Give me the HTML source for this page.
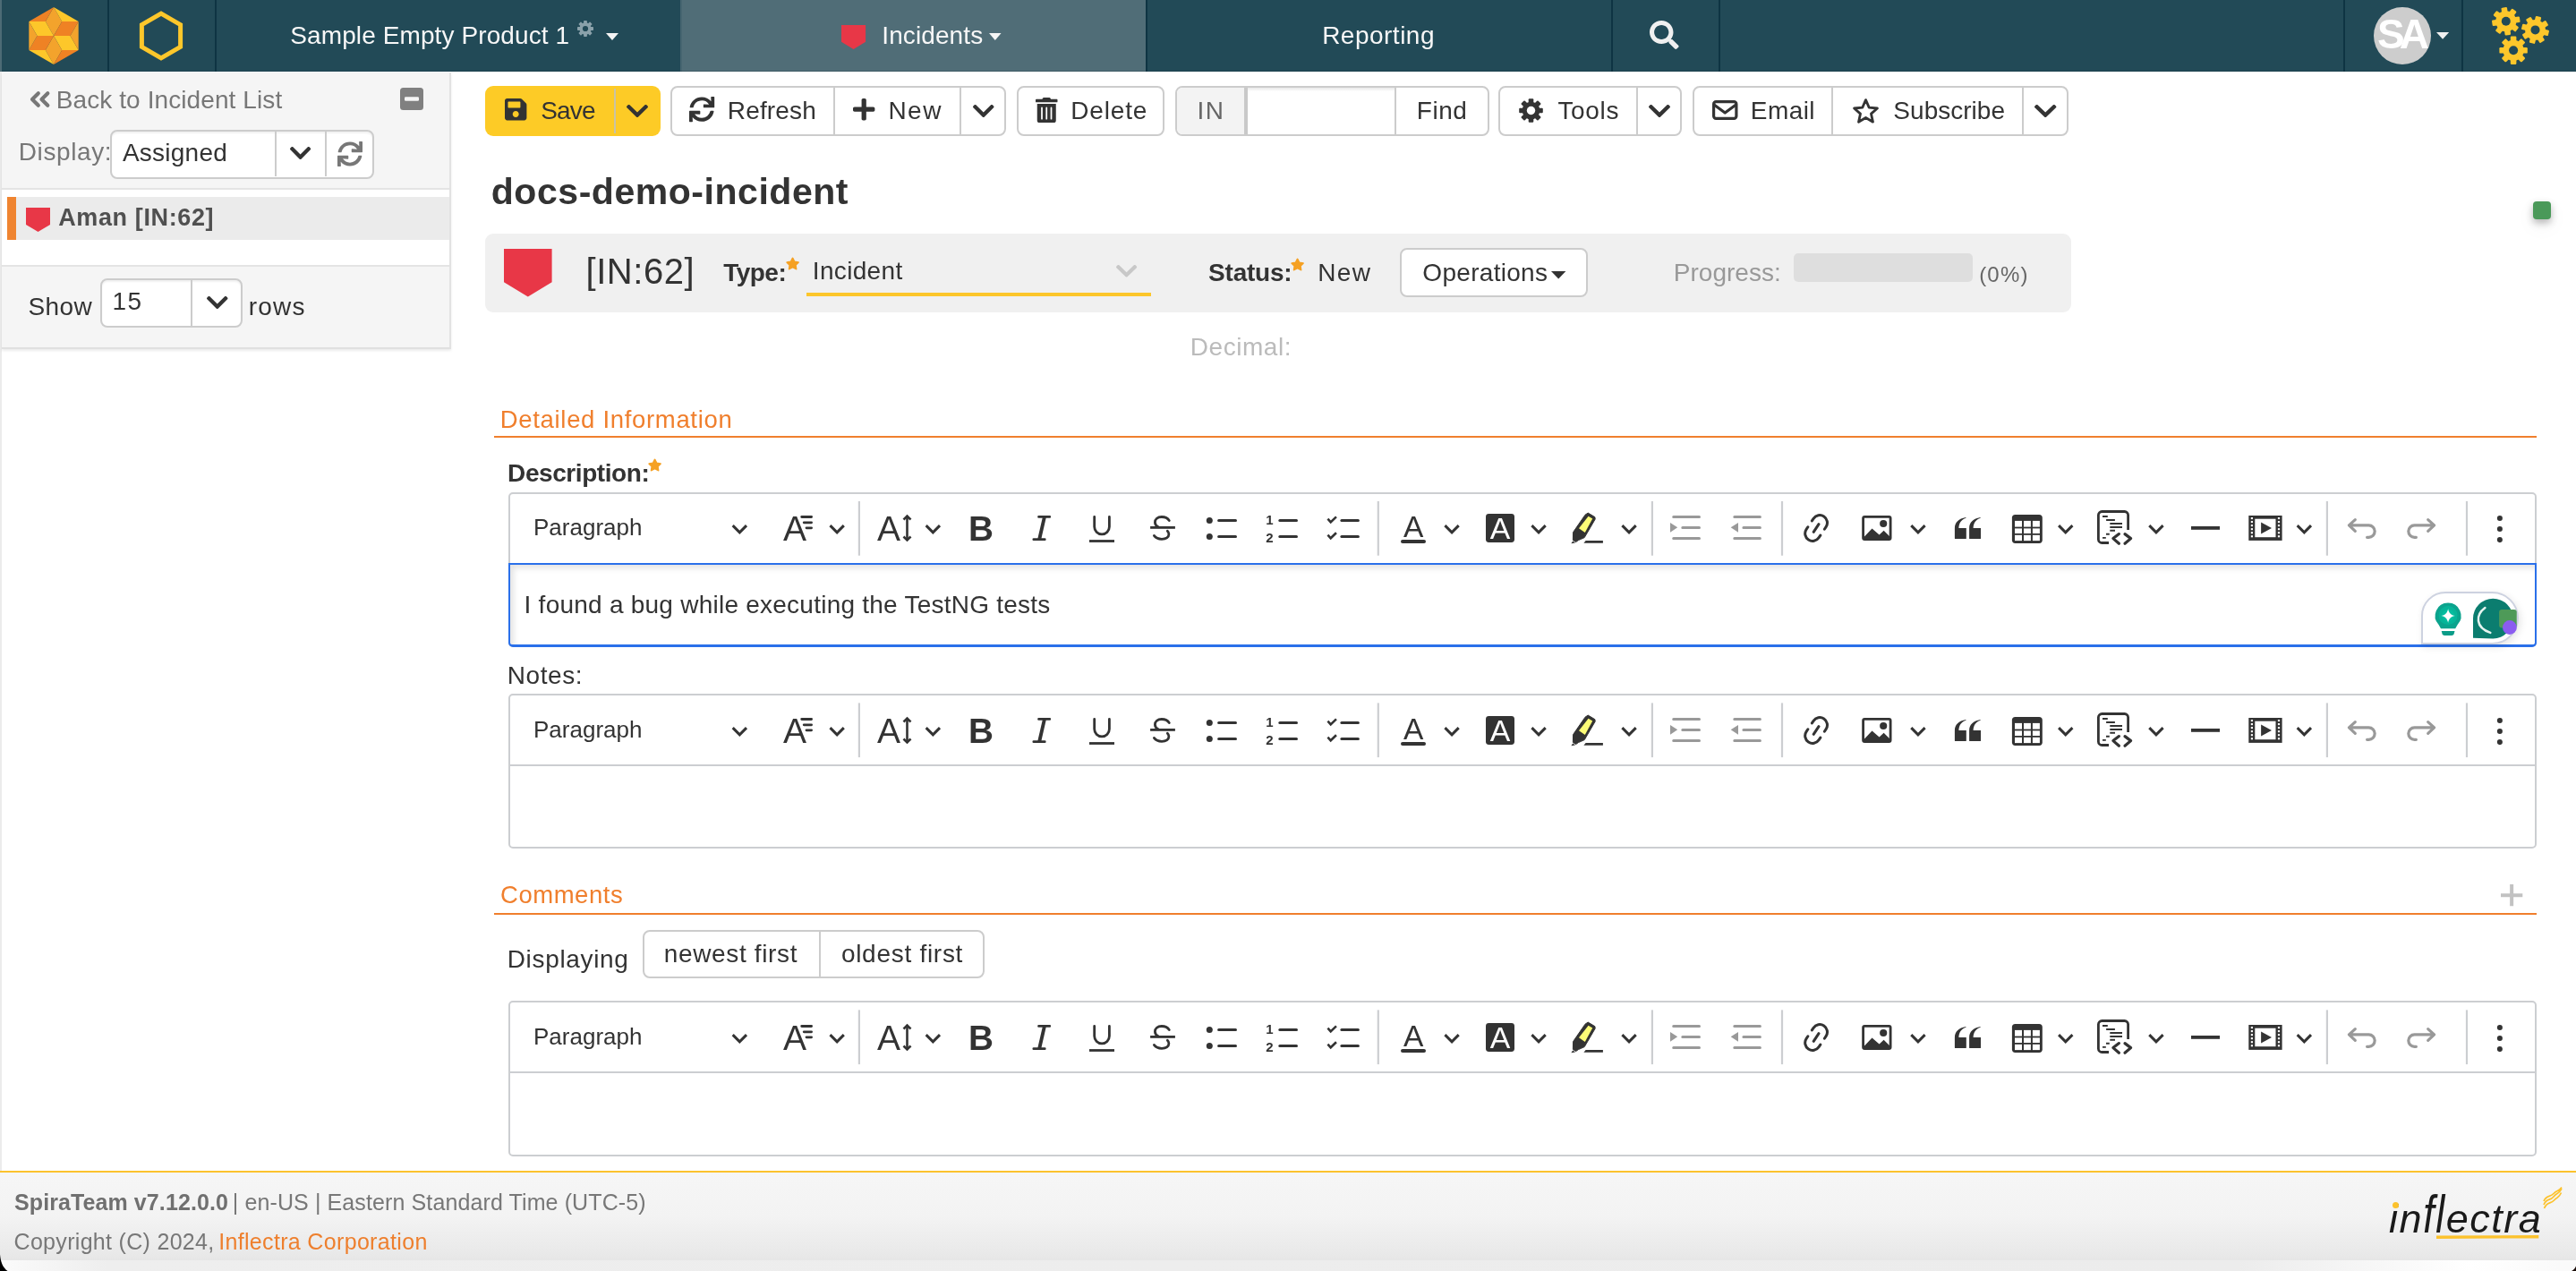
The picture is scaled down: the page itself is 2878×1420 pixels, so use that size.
<!DOCTYPE html>
<html lang="en"><head><meta charset="utf-8"><title>docs-demo-incident | SpiraTeam</title>
<style>
*{box-sizing:border-box;margin:0;padding:0}
html,body{width:2878px;height:1420px;overflow:hidden;background:#fff}
body{position:relative;will-change:transform;font-family:"Liberation Sans",sans-serif;color:#333}
div,span.t,svg{position:absolute}
span.t{white-space:nowrap;display:block}
svg{overflow:visible}
@media (max-width:2000px){html{zoom:.5}}
</style></head>
<body>
<div style="left:0px;top:0px;width:2878px;height:80px;background:#224a57"></div><div style="left:760px;top:0px;width:520px;height:80px;background:#506d77"></div><div style="left:760px;top:0px;width:2px;height:80px;background:#466570"></div><div style="left:120px;top:0px;width:2px;height:80px;background:#0e3443"></div><div style="left:240px;top:0px;width:2px;height:80px;background:#0e3443"></div><div style="left:1280px;top:0px;width:2px;height:80px;background:#0e3443"></div><div style="left:1800.2px;top:0px;width:2px;height:80px;background:#0e3443"></div><div style="left:1920.1px;top:0px;width:2px;height:80px;background:#0e3443"></div><div style="left:2618px;top:0px;width:2px;height:80px;background:#0e3443"></div><div style="left:2749.8px;top:0px;width:2px;height:80px;background:#0e3443"></div><div style="left:0px;top:79px;width:2878px;height:1px;background:rgba(10,40,52,.25)"></div><div style="left:0px;top:0px;width:2px;height:80px;background:#4d6b75"></div><svg style="left:0px;top:0px;" width="120" height="80" viewBox="0 0 120 80" ><polygon points="60.0,39.9 50.8,23.9 60.0,7.9 69.2,23.9" fill="#f3a32c"/><polygon points="60.0,39.9 69.2,23.9 87.7,23.9 78.5,39.9" fill="#ef8224"/><polygon points="60.0,39.9 78.5,39.9 87.7,55.9 69.2,55.9" fill="#fdc72a"/><polygon points="60.0,39.9 69.2,55.9 60.0,71.9 50.8,55.9" fill="#f3a32c"/><polygon points="60.0,39.9 50.8,55.9 32.3,55.9 41.5,39.9" fill="#ef8224"/><polygon points="60.0,39.9 41.5,39.9 32.3,23.9 50.8,23.9" fill="#fdc72a"/><polygon points="60.0,7.9 87.7,23.9 69.2,23.9" fill="#fdc72a"/><polygon points="87.7,23.9 87.7,55.9 78.5,39.9" fill="#f3a32c"/><polygon points="87.7,55.9 60.0,71.9 69.2,55.9" fill="#ef8224"/><polygon points="60.0,71.9 32.3,55.9 50.8,55.9" fill="#fdc72a"/><polygon points="32.3,55.9 32.3,23.9 41.5,39.9" fill="#f3a32c"/><polygon points="32.3,23.9 60.0,7.9 50.8,23.9" fill="#ef8224"/></svg><svg style="left:120px;top:0px;" width="120" height="80" viewBox="120 0 120 80" ><polygon points="180.0,15.1 201.6,27.6 201.6,52.4 180.0,64.9 158.4,52.4 158.4,27.6" fill="none" stroke="#fdc72b" stroke-width="5"/></svg><span id="t0" class="t" style='left:324.25px;top:25.80px;font-size:28px;line-height:28px;color:#f7f7f7;letter-spacing:0.104px;'>Sample Empty Product 1</span><svg style="left:644.3px;top:22.1px;" width="20" height="20" viewBox="0 0 20 20" ><g transform="translate(10,10)" fill="#8aa1aa"><circle r="6.66"/><rect x="-1.89" y="-9.00" width="3.78" height="9.00" rx="0.68" transform="rotate(0.0)"/><rect x="-1.89" y="-9.00" width="3.78" height="9.00" rx="0.68" transform="rotate(45.0)"/><rect x="-1.89" y="-9.00" width="3.78" height="9.00" rx="0.68" transform="rotate(90.0)"/><rect x="-1.89" y="-9.00" width="3.78" height="9.00" rx="0.68" transform="rotate(135.0)"/><rect x="-1.89" y="-9.00" width="3.78" height="9.00" rx="0.68" transform="rotate(180.0)"/><rect x="-1.89" y="-9.00" width="3.78" height="9.00" rx="0.68" transform="rotate(225.0)"/><rect x="-1.89" y="-9.00" width="3.78" height="9.00" rx="0.68" transform="rotate(270.0)"/><rect x="-1.89" y="-9.00" width="3.78" height="9.00" rx="0.68" transform="rotate(315.0)"/></g><circle cx="10" cy="10" r="3.1" fill="#224a57"/></svg><svg style="left:677.2px;top:36.6px;" width="14" height="7.9" viewBox="0 0 14 7.9" ><path d="M0 0H14L7.0 7.9z" fill="#f5f5f5"/></svg><svg style="left:940.3px;top:28.2px;" width="27.1" height="26.9" viewBox="0 0 27.1 26.9" ><path d="M0 0H27.1V18.83L13.55 26.9L0 18.83z" fill="#e83747"/></svg><span id="t1" class="t" style='left:985.27px;top:25.80px;font-size:28px;line-height:28px;color:#f7f7f7;letter-spacing:0.100px;'>Incidents</span><svg style="left:1104.5px;top:36.5px;" width="13.6" height="8.1" viewBox="0 0 13.6 8.1" ><path d="M0 0H13.6L6.8 8.1z" fill="#f5f5f5"/></svg><span id="t2" class="t" style='left:1477.15px;top:25.80px;font-size:28px;line-height:28px;color:#f7f7f7;letter-spacing:0.491px;'>Reporting</span><svg style="left:1843px;top:23px;" width="32.6" height="32" viewBox="0 0 512 512" preserveAspectRatio="none"><path d="M505 442.7L405.300 343c-4.500-4.500-10.600-7-17-7H372c27.600-35.300 44-79.700 44-128C416 93.100 322.900 0 208 0S0 93.100 0 208s93.100 208 208 208c48.300 0 92.700-16.400 128-44v16.300c0 6.400 2.500 12.500 7 17l99.700 99.700c9.400 9.400 24.600 9.400 33.900 0l28.300-28.300c9.400-9.400 9.400-24.600.100-34zM208 336c-70.700 0-128-57.200-128-128 0-70.700 57.200-128 128-128 70.700 0 128 57.200 128 128 0 70.700-57.200 128-128 128z" fill="#f0f0f0"/></svg><div style="left:2652px;top:8px;width:63.8px;height:64px;background:#cdcdcd;border-radius:50%"></div><span id="t3" class="t" style='left:2655.93px;top:14.76px;font-size:46px;line-height:46px;color:#fff;font-weight:700;letter-spacing:-5.850px;'>SA</span><svg style="left:2722px;top:36.4px;" width="14.2" height="7.7" viewBox="0 0 14.2 7.7" ><path d="M0 0H14.2L7.1 7.7z" fill="#f0f0f0"/></svg><svg style="left:2780px;top:4px;" width="76" height="72" viewBox="0 0 76 72" ><g transform="translate(19.8,19.8)" fill="#fdc72b"><circle r="11.54"/><rect x="-3.28" y="-15.60" width="6.55" height="15.60" rx="1.18" transform="rotate(-8.0)"/><rect x="-3.28" y="-15.60" width="6.55" height="15.60" rx="1.18" transform="rotate(37.0)"/><rect x="-3.28" y="-15.60" width="6.55" height="15.60" rx="1.18" transform="rotate(82.0)"/><rect x="-3.28" y="-15.60" width="6.55" height="15.60" rx="1.18" transform="rotate(127.0)"/><rect x="-3.28" y="-15.60" width="6.55" height="15.60" rx="1.18" transform="rotate(172.0)"/><rect x="-3.28" y="-15.60" width="6.55" height="15.60" rx="1.18" transform="rotate(217.0)"/><rect x="-3.28" y="-15.60" width="6.55" height="15.60" rx="1.18" transform="rotate(262.0)"/><rect x="-3.28" y="-15.60" width="6.55" height="15.60" rx="1.18" transform="rotate(307.0)"/></g><circle cx="19.8" cy="19.8" r="5" fill="#224a57"/><g transform="translate(52.5,29.4)" fill="#fdc72b"><circle r="11.40"/><rect x="-3.23" y="-15.40" width="6.47" height="15.40" rx="1.16" transform="rotate(14.0)"/><rect x="-3.23" y="-15.40" width="6.47" height="15.40" rx="1.16" transform="rotate(59.0)"/><rect x="-3.23" y="-15.40" width="6.47" height="15.40" rx="1.16" transform="rotate(104.0)"/><rect x="-3.23" y="-15.40" width="6.47" height="15.40" rx="1.16" transform="rotate(149.0)"/><rect x="-3.23" y="-15.40" width="6.47" height="15.40" rx="1.16" transform="rotate(194.0)"/><rect x="-3.23" y="-15.40" width="6.47" height="15.40" rx="1.16" transform="rotate(239.0)"/><rect x="-3.23" y="-15.40" width="6.47" height="15.40" rx="1.16" transform="rotate(284.0)"/><rect x="-3.23" y="-15.40" width="6.47" height="15.40" rx="1.16" transform="rotate(329.0)"/></g><circle cx="52.5" cy="29.4" r="5" fill="#224a57"/><g transform="translate(28.1,52.3)" fill="#fdc72b"><circle r="11.62"/><rect x="-3.30" y="-15.70" width="6.59" height="15.70" rx="1.19" transform="rotate(0.0)"/><rect x="-3.30" y="-15.70" width="6.59" height="15.70" rx="1.19" transform="rotate(45.0)"/><rect x="-3.30" y="-15.70" width="6.59" height="15.70" rx="1.19" transform="rotate(90.0)"/><rect x="-3.30" y="-15.70" width="6.59" height="15.70" rx="1.19" transform="rotate(135.0)"/><rect x="-3.30" y="-15.70" width="6.59" height="15.70" rx="1.19" transform="rotate(180.0)"/><rect x="-3.30" y="-15.70" width="6.59" height="15.70" rx="1.19" transform="rotate(225.0)"/><rect x="-3.30" y="-15.70" width="6.59" height="15.70" rx="1.19" transform="rotate(270.0)"/><rect x="-3.30" y="-15.70" width="6.59" height="15.70" rx="1.19" transform="rotate(315.0)"/></g><circle cx="28.1" cy="52.3" r="5" fill="#224a57"/></svg><div style="left:0px;top:80px;width:2px;height:1340px;background:#ebebeb"></div><div style="left:2px;top:81px;width:502px;height:309px;background:#f5f5f5;border-radius:3px 0 0 0;border-right:2px solid #e2e2e2;border-bottom:2px solid #e0e0e0;box-shadow:0 2px 3px rgba(0,0,0,.08)"></div><div style="left:2px;top:210px;width:500px;height:88px;background:#fff;border-top:2px solid #e4e4e4;border-bottom:2px solid #e4e4e4"></div><div style="left:8px;top:220px;width:494px;height:48px;background:#ebebeb"></div><div style="left:8px;top:220px;width:10px;height:48px;background:#ef8430"></div><svg style="left:28.5px;top:232.4px;" width="27" height="27" viewBox="0 0 27 27" ><path d="M0 0H27V18.90L13.5 27L0 18.90z" fill="#e83747"/></svg><span id="t4" class="t" style='left:65.25px;top:230.24px;font-size:27px;line-height:27px;color:#505050;font-weight:700;letter-spacing:0.614px;'>Aman [IN:62]</span><svg style="left:33px;top:102px;" width="23" height="18" viewBox="0 0 23 18" ><path d="M9.800 2.300L3 9L9.800 15.700M20.300 2.300L13.500 9L20.300 15.700" fill="none" stroke="#777" stroke-width="4.200" stroke-linejoin="round" stroke-linecap="round"/></svg><span id="t5" class="t" style='left:62.75px;top:97.90px;font-size:28px;line-height:28px;color:#777;letter-spacing:0.094px;'>Back to Incident List</span><svg style="left:447px;top:98px;" width="26" height="25" viewBox="0 0 26 25" ><rect width="26" height="25" rx="3.5" fill="#808080"/><rect x="5" y="10.3" width="16" height="4.4" rx="1.2" fill="#f5f5f5"/></svg><span id="t6" class="t" style='left:20.75px;top:156.40px;font-size:28px;line-height:28px;color:#777;letter-spacing:0.607px;'>Display:</span><div style="left:123.3px;top:144.6px;width:295.2px;height:55px;background:#fff;border:2px solid #ccc;border-radius:8px;box-shadow:inset 0 2px 2px rgba(0,0,0,.06)"></div><div style="left:307px;top:147px;width:2px;height:50px;background:#ccc"></div><div style="left:363px;top:147px;width:2px;height:50px;background:#ccc"></div><span id="t7" class="t" style='left:136.88px;top:157.40px;font-size:28px;line-height:28px;color:#333;letter-spacing:0.250px;'>Assigned</span><svg style="left:324.4px;top:164.4px;" width="23.2" height="14" viewBox="5.66 123.5 436.7 265" preserveAspectRatio="none"><path d="M207.029 381.476L12.686 187.132c-9.373-9.373-9.373-24.569 0-33.941l22.667-22.667c9.357-9.357 24.522-9.375 33.901-.04L224 284.505l154.745-154.021c9.379-9.335 24.544-9.317 33.901.04l22.667 22.667c9.373 9.373 9.373 24.569 0 33.941L240.971 381.476c-9.373 9.372-24.569 9.372-33.942 0z" fill="#333"/></svg><svg style="left:376.6px;top:158px;" width="28" height="28" viewBox="0 0 512 512" ><path d="M440.65 12.57l4 82.77A247.16 247.16 0 0 0 255.83 8C134.73 8 33.91 94.92 12.29 209.82A12 12 0 0 0 24.09 224h49.05a12 12 0 0 0 11.67-9.26 175.91 175.91 0 0 1 317-56.94l-101.46-4.86a12 12 0 0 0-12.57 12v47.41a12 12 0 0 0 12 12H500a12 12 0 0 0 12-12V12a12 12 0 0 0-12-12h-47.37a12 12 0 0 0-11.98 12.57zM255.83 432a175.61 175.61 0 0 1-146-77.8l101.8 4.87a12 12 0 0 0 12.57-12v-47.4a12 12 0 0 0-12-12H12a12 12 0 0 0-12 12V500a12 12 0 0 0 12 12h47.35a12 12 0 0 0 12-12.6l-4.15-82.57A247.17 247.17 0 0 0 255.83 504c121.11 0 221.93-86.92 243.55-201.82a12 12 0 0 0-11.8-14.18h-49.05a12 12 0 0 0-11.67 9.26A175.86 175.86 0 0 1 255.83 432z" fill="#777"/></svg><span id="t8" class="t" style='left:31.45px;top:328.90px;font-size:28px;line-height:28px;color:#333;letter-spacing:0.375px;'>Show</span><div style="left:111.5px;top:310.7px;width:159px;height:55px;background:#fff;border:2px solid #ccc;border-radius:8px;box-shadow:inset 0 2px 2px rgba(0,0,0,.06)"></div><div style="left:213px;top:312.7px;width:2px;height:51px;background:#ccc"></div><span id="t9" class="t" style='left:125.39px;top:322.60px;font-size:28px;line-height:28px;color:#333;letter-spacing:1.500px;'>15</span><svg style="left:230.5px;top:331px;" width="23.5" height="14" viewBox="5.66 123.5 436.7 265" preserveAspectRatio="none"><path d="M207.029 381.476L12.686 187.132c-9.373-9.373-9.373-24.569 0-33.941l22.667-22.667c9.357-9.357 24.522-9.375 33.901-.04L224 284.505l154.745-154.021c9.379-9.335 24.544-9.317 33.901.04l22.667 22.667c9.373 9.373 9.373 24.569 0 33.941L240.971 381.476c-9.373 9.372-24.569 9.372-33.942 0z" fill="#333"/></svg><span id="t10" class="t" style='left:277.73px;top:328.90px;font-size:28px;line-height:28px;color:#333;letter-spacing:1.250px;'>rows</span><div style="left:542px;top:96px;width:196px;height:56px;background:#fdcb26;border-radius:9px"></div><div style="left:686px;top:99px;width:2px;height:50px;background:#c9c3a6"></div><svg style="left:564px;top:110.4px;" width="24.4" height="24.4" viewBox="0 32 448 448" preserveAspectRatio="none"><path d="M433.941 129.941l-83.882-83.882A48 48 0 0 0 316.118 32H48C21.49 32 0 53.49 0 80v352c0 26.51 21.49 48 48 48h352c26.51 0 48-21.49 48-48V163.882a48 48 0 0 0-14.059-33.941zM224 416c-35.346 0-64-28.654-64-64 0-35.346 28.654-64 64-64s64 28.654 64 64c0 35.346-28.654 64-64 64zm96-304.52V212c0 6.627-5.373 12-12 12H76c-6.627 0-12-5.373-12-12V108c0-6.627 5.373-12 12-12h228.52c3.183 0 6.235 1.264 8.485 3.515l3.48 3.48A11.996 11.996 0 0 1 320 111.48z" fill="#333"/></svg><span id="t11" class="t" style='left:604.15px;top:109.70px;font-size:28px;line-height:28px;color:#333;letter-spacing:-0.792px;'>Save</span><svg style="left:700px;top:116.6px;" width="24" height="14" viewBox="5.66 123.5 436.7 265" preserveAspectRatio="none"><path d="M207.029 381.476L12.686 187.132c-9.373-9.373-9.373-24.569 0-33.941l22.667-22.667c9.357-9.357 24.522-9.375 33.901-.04L224 284.505l154.745-154.021c9.379-9.335 24.544-9.317 33.901.04l22.667 22.667c9.373 9.373 9.373 24.569 0 33.941L240.971 381.476c-9.373 9.372-24.569 9.372-33.942 0z" fill="#333"/></svg><div style="left:749px;top:96px;width:375px;height:56px;background:#fff;border:2px solid #ccc;border-radius:8px"></div><div style="left:931px;top:98px;width:2px;height:52px;background:#ccc"></div><div style="left:1072px;top:98px;width:2px;height:52px;background:#ccc"></div><svg style="left:769.9px;top:108.1px;" width="28.2" height="28.2" viewBox="0 0 512 512" ><path d="M440.65 12.57l4 82.77A247.16 247.16 0 0 0 255.83 8C134.73 8 33.91 94.92 12.29 209.82A12 12 0 0 0 24.09 224h49.05a12 12 0 0 0 11.67-9.26 175.91 175.91 0 0 1 317-56.94l-101.46-4.86a12 12 0 0 0-12.57 12v47.41a12 12 0 0 0 12 12H500a12 12 0 0 0 12-12V12a12 12 0 0 0-12-12h-47.37a12 12 0 0 0-11.98 12.57zM255.83 432a175.61 175.61 0 0 1-146-77.8l101.8 4.87a12 12 0 0 0 12.57-12v-47.4a12 12 0 0 0-12-12H12a12 12 0 0 0-12 12V500a12 12 0 0 0 12 12h47.35a12 12 0 0 0 12-12.6l-4.15-82.57A247.17 247.17 0 0 0 255.83 504c121.11 0 221.93-86.92 243.55-201.82a12 12 0 0 0-11.8-14.18h-49.05a12 12 0 0 0-11.67 9.26A175.86 175.86 0 0 1 255.83 432z" fill="#333"/></svg><span id="t12" class="t" style='left:812.75px;top:109.70px;font-size:28px;line-height:28px;color:#333;letter-spacing:0.167px;'>Refresh</span><svg style="left:952.8px;top:110.3px;" width="24.4" height="24.4" viewBox="0 32 448 448" preserveAspectRatio="none"><path d="M416 208H272V64c0-17.67-14.33-32-32-32h-32c-17.67 0-32 14.33-32 32v144H32c-17.67 0-32 14.33-32 32v32c0 17.67 14.33 32 32 32h144v144c0 17.67 14.33 32 32 32h32c17.67 0 32-14.33 32-32V304h144c17.67 0 32-14.33 32-32v-32c0-17.67-14.33-32-32-32z" fill="#333"/></svg><span id="t13" class="t" style='left:992.38px;top:109.70px;font-size:28px;line-height:28px;color:#333;letter-spacing:1.500px;'>New</span><svg style="left:1086.8px;top:116.6px;" width="23.5" height="14" viewBox="5.66 123.5 436.7 265" preserveAspectRatio="none"><path d="M207.029 381.476L12.686 187.132c-9.373-9.373-9.373-24.569 0-33.941l22.667-22.667c9.357-9.357 24.522-9.375 33.901-.04L224 284.505l154.745-154.021c9.379-9.335 24.544-9.317 33.901.04l22.667 22.667c9.373 9.373 9.373 24.569 0 33.941L240.971 381.476c-9.373 9.372-24.569 9.372-33.942 0z" fill="#333"/></svg><div style="left:1135.5px;top:96px;width:165.5px;height:56px;background:#fff;border:2px solid #ccc;border-radius:8px"></div><svg style="left:1156.6px;top:108.8px;" width="24.5" height="28" viewBox="0 0 448 512" preserveAspectRatio="none"><path d="M32 464a48 48 0 0 0 48 48h288a48 48 0 0 0 48-48V128H32zm272-256a16 16 0 0 1 32 0v224a16 16 0 0 1-32 0zm-96 0a16 16 0 0 1 32 0v224a16 16 0 0 1-32 0zm-96 0a16 16 0 0 1 32 0v224a16 16 0 0 1-32 0zM432 32H312l-9.4-18.7A24 24 0 0 0 281.1 0H166.800a23.720 23.720 0 0 0-21.400 13.300L136 32H16A16 16 0 0 0 0 48v32a16 16 0 0 0 16 16h416a16 16 0 0 0 16-16V48a16 16 0 0 0-16-16z" fill="#333"/></svg><span id="t14" class="t" style='left:1196.35px;top:109.70px;font-size:28px;line-height:28px;color:#333;letter-spacing:0.800px;'>Delete</span><div style="left:1312.5px;top:96px;width:351px;height:56px;background:#fff;border:2px solid #ccc;border-radius:8px"></div><div style="left:1558px;top:98px;width:2px;height:52px;background:#ccc"></div><div style="left:1315px;top:98px;width:75px;height:52px;background:#f3f3f3;border-radius:6px 0 0 6px"></div><div style="left:1390px;top:98px;width:4px;height:52px;background:#c9c9c9"></div><div style="left:1394px;top:98px;width:164px;height:4px;background:linear-gradient(#e9e9e9,#fff)"></div><span id="t15" class="t" style='left:1337.42px;top:109.70px;font-size:28px;line-height:28px;color:#666;letter-spacing:1.500px;'>IN</span><span id="t16" class="t" style='left:1582.75px;top:109.70px;font-size:28px;line-height:28px;color:#333;letter-spacing:0.542px;'>Find</span><div style="left:1674px;top:96px;width:205px;height:56px;background:#fff;border:2px solid #ccc;border-radius:8px"></div><div style="left:1828px;top:98px;width:2px;height:52px;background:#ccc"></div><svg style="left:1697px;top:109.5px;" width="27" height="27" viewBox="0 0 27 27" ><g transform="translate(13.5,13.5)" fill="#333"><circle r="9.84"/><rect x="-2.79" y="-13.30" width="5.59" height="13.30" rx="1.01" transform="rotate(0.0)"/><rect x="-2.79" y="-13.30" width="5.59" height="13.30" rx="1.01" transform="rotate(45.0)"/><rect x="-2.79" y="-13.30" width="5.59" height="13.30" rx="1.01" transform="rotate(90.0)"/><rect x="-2.79" y="-13.30" width="5.59" height="13.30" rx="1.01" transform="rotate(135.0)"/><rect x="-2.79" y="-13.30" width="5.59" height="13.30" rx="1.01" transform="rotate(180.0)"/><rect x="-2.79" y="-13.30" width="5.59" height="13.30" rx="1.01" transform="rotate(225.0)"/><rect x="-2.79" y="-13.30" width="5.59" height="13.30" rx="1.01" transform="rotate(270.0)"/><rect x="-2.79" y="-13.30" width="5.59" height="13.30" rx="1.01" transform="rotate(315.0)"/></g><circle cx="13.5" cy="13.5" r="4.7" fill="#fff"/></svg><span id="t17" class="t" style='left:1740.38px;top:109.70px;font-size:28px;line-height:28px;color:#333;letter-spacing:0.688px;'>Tools</span><svg style="left:1842px;top:116.6px;" width="24" height="14" viewBox="5.66 123.5 436.7 265" preserveAspectRatio="none"><path d="M207.029 381.476L12.686 187.132c-9.373-9.373-9.373-24.569 0-33.941l22.667-22.667c9.357-9.357 24.522-9.375 33.901-.04L224 284.505l154.745-154.021c9.379-9.335 24.544-9.317 33.901.04l22.667 22.667c9.373 9.373 9.373 24.569 0 33.941L240.971 381.476c-9.373 9.372-24.569 9.372-33.942 0z" fill="#333"/></svg><div style="left:1890.7px;top:96px;width:420.3px;height:56px;background:#fff;border:2px solid #ccc;border-radius:8px"></div><div style="left:2046px;top:98px;width:2px;height:52px;background:#ccc"></div><div style="left:2259px;top:98px;width:2px;height:52px;background:#ccc"></div><svg style="left:1912.5px;top:111.5px;" width="28.5" height="22" viewBox="0 0 28.5 22" ><rect x="1.6" y="1.6" width="25.3" height="18.8" rx="2.6" fill="none" stroke="#333" stroke-width="3.2"/><path d="M2 5L14.25 14L26.5 5" fill="none" stroke="#333" stroke-width="3.2" stroke-linejoin="round"/></svg><span id="t18" class="t" style='left:1955.75px;top:109.70px;font-size:28px;line-height:28px;color:#333;letter-spacing:0.456px;'>Email</span><svg style="left:2068.5px;top:108.5px;" width="31" height="30" viewBox="0 0 31 30" ><polygon points="15.50,2.60 19.20,11.10 28.43,12.00 21.49,18.15 23.49,27.20 15.50,22.50 7.51,27.20 9.51,18.15 2.57,12.00 11.80,11.10" fill="none" stroke="#333" stroke-width="2.8" stroke-linejoin="round"/></svg><span id="t19" class="t" style='left:2115.35px;top:109.70px;font-size:28px;line-height:28px;color:#333;letter-spacing:0.022px;'>Subscribe</span><svg style="left:2272.6px;top:116.6px;" width="24.4" height="14" viewBox="5.66 123.5 436.7 265" preserveAspectRatio="none"><path d="M207.029 381.476L12.686 187.132c-9.373-9.373-9.373-24.569 0-33.941l22.667-22.667c9.357-9.357 24.522-9.375 33.901-.04L224 284.505l154.745-154.021c9.379-9.335 24.544-9.317 33.901.04l22.667 22.667c9.373 9.373 9.373 24.569 0 33.941L240.971 381.476c-9.373 9.372-24.569 9.372-33.942 0z" fill="#333"/></svg><span id="t20" class="t" style='left:548.77px;top:194.29px;font-size:41px;line-height:41px;color:#333;font-weight:700;letter-spacing:0.543px;'>docs-demo-incident</span><div style="left:2830px;top:225px;width:20px;height:20px;background:#4a9959;border-radius:4px;box-shadow:0 4px 9px rgba(0,0,0,.28), 0 8px 24px rgba(0,0,0,.05)"></div><div style="left:542px;top:261px;width:1772px;height:88px;background:#f0f0f0;border-radius:9px"></div><svg style="left:563px;top:278px;" width="53.6" height="53.4" viewBox="0 0 53.6 53.4" ><path d="M0 0H53.6V37.38L26.8 53.4L0 37.38z" fill="#e83747"/></svg><span id="t21" class="t" style='left:654.52px;top:283.34px;font-size:40px;line-height:40px;color:#333;letter-spacing:0.546px;'>[IN:62]</span><span id="t22" class="t" style='left:808.23px;top:290.60px;font-size:28px;line-height:28px;color:#333;font-weight:700;letter-spacing:-0.525px;'>Type:</span><svg style="left:877.9px;top:287.2px;" width="15.2" height="15.2" viewBox="0 0 20 20" ><polygon points="10.00,1.90 12.65,7.06 18.37,7.98 14.28,12.09 15.17,17.82 10.00,15.20 4.83,17.82 5.72,12.09 1.63,7.98 7.35,7.06" fill="#f5a124" stroke="#f5a124" stroke-width="2.400" stroke-linejoin="round"/></svg><span id="t23" class="t" style='left:907.77px;top:288.90px;font-size:28px;line-height:28px;color:#333;letter-spacing:0.336px;'>Incident</span><div style="left:901px;top:326.7px;width:384.6px;height:4px;background:#fcc62b"></div><svg style="left:1246.8px;top:295.6px;" width="23.2" height="13.6" viewBox="5.66 123.5 436.7 265" preserveAspectRatio="none"><path d="M207.029 381.476L12.686 187.132c-9.373-9.373-9.373-24.569 0-33.941l22.667-22.667c9.357-9.357 24.522-9.375 33.901-.04L224 284.505l154.745-154.021c9.379-9.335 24.544-9.317 33.901.04l22.667 22.667c9.373 9.373 9.373 24.569 0 33.941L240.971 381.476c-9.373 9.372-24.569 9.372-33.942 0z" fill="#c8c8c8"/></svg><span id="t24" class="t" style='left:1350.12px;top:290.70px;font-size:28px;line-height:28px;color:#333;font-weight:700;letter-spacing:-0.229px;'>Status:</span><svg style="left:1441.8px;top:287.6px;" width="15.2" height="15.2" viewBox="0 0 20 20" ><polygon points="10.00,1.90 12.65,7.06 18.37,7.98 14.28,12.09 15.17,17.82 10.00,15.20 4.83,17.82 5.72,12.09 1.63,7.98 7.35,7.06" fill="#f5a124" stroke="#f5a124" stroke-width="2.400" stroke-linejoin="round"/></svg><span id="t25" class="t" style='left:1472.15px;top:290.70px;font-size:28px;line-height:28px;color:#333;letter-spacing:1.425px;'>New</span><div style="left:1564.4px;top:277.2px;width:209.8px;height:55.2px;background:#fff;border:2px solid #ccc;border-radius:8px"></div><span id="t26" class="t" style='left:1589.33px;top:290.70px;font-size:28px;line-height:28px;color:#333;letter-spacing:0.297px;'>Operations</span><svg style="left:1732.8px;top:302.5px;" width="16.4" height="8.6" viewBox="0 0 16.4 8.6" ><path d="M0 0H16.4L8.2 8.6z" fill="#333"/></svg><span id="t27" class="t" style='left:1869.85px;top:290.70px;font-size:28px;line-height:28px;color:#999;'>Progress:</span><div style="left:2004.3px;top:283px;width:199.5px;height:32px;background:#dedede;border-radius:5px"></div><span id="t28" class="t" style='left:2211.20px;top:294.88px;font-size:24px;line-height:24px;color:#666;letter-spacing:1.192px;'>(0%)</span><span id="t29" class="t" style='left:1329.75px;top:374.30px;font-size:28px;line-height:28px;color:#bbb;letter-spacing:0.554px;'>Decimal:</span><span id="t30" class="t" style='left:558.75px;top:454.62px;font-size:27.5px;line-height:27.5px;color:#f07f2d;letter-spacing:0.678px;'>Detailed Information</span><div style="left:552px;top:487.2px;width:2282px;height:2px;background:#f07f2d"></div><span id="t31" class="t" style='left:567.12px;top:515.20px;font-size:28px;line-height:28px;color:#333;font-weight:700;letter-spacing:-0.432px;'>Description:</span><svg style="left:724.3px;top:512.2px;" width="15.2" height="15.2" viewBox="0 0 20 20" ><polygon points="10.00,1.90 12.65,7.06 18.37,7.98 14.28,12.09 15.17,17.82 10.00,15.20 4.83,17.82 5.72,12.09 1.63,7.98 7.35,7.06" fill="#f5a124" stroke="#f5a124" stroke-width="2.400" stroke-linejoin="round"/></svg><div style="left:567.7px;top:549.5px;width:2266.1000000000004px;height:173.20000000000005px;background:#fff;border:2px solid #ccced1;border-radius:5px"></div><div style="left:567.7px;top:628.5px;width:2266.1000000000004px;height:2px;background:#ccced1"></div><div style="left:567.7px;top:628.5px;width:2266.1000000000004px;height:94.20000000000005px;background:#fff;border:2px solid #2a70ea;border-bottom-width:3px;border-radius:0 0 5px 5px;box-shadow:inset 4px 4px 6px rgba(0,0,0,.11)"></div><svg style="left:560px;top:550.0px" width="2300" height="80" viewBox="560 550 2300 80"><rect x="958.8" y="560.0" width="2.2" height="60.7" fill="#ccced1"/><rect x="1538.7" y="560.0" width="2.2" height="60.7" fill="#ccced1"/><rect x="1844.8" y="560.0" width="2.2" height="60.7" fill="#ccced1"/><rect x="1989.9" y="560.0" width="2.2" height="60.7" fill="#ccced1"/><rect x="2598.8" y="560.0" width="2.2" height="60.7" fill="#ccced1"/><rect x="2754.9" y="560.0" width="2.2" height="60.7" fill="#ccced1"/><path d="M818.7 587.1L826.35 594.8L834.0 587.1" fill="none" stroke="#333" stroke-width="3" stroke-linecap="butt" stroke-linejoin="miter"/><path d="M927.5 587.1L935.15 594.8L942.8 587.1" fill="none" stroke="#333" stroke-width="3" stroke-linecap="butt" stroke-linejoin="miter"/><path d="M1034.7 587.1L1042.35 594.8L1050.0 587.1" fill="none" stroke="#333" stroke-width="3" stroke-linecap="butt" stroke-linejoin="miter"/><path d="M1614.4 587.1L1622.05 594.8L1629.7 587.1" fill="none" stroke="#333" stroke-width="3" stroke-linecap="butt" stroke-linejoin="miter"/><path d="M1711.4 587.1L1719.05 594.8L1726.7 587.1" fill="none" stroke="#333" stroke-width="3" stroke-linecap="butt" stroke-linejoin="miter"/><path d="M1812.4 587.1L1820.05 594.8L1827.7 587.1" fill="none" stroke="#333" stroke-width="3" stroke-linecap="butt" stroke-linejoin="miter"/><path d="M2135.3 587.1L2142.95 594.8L2150.6 587.1" fill="none" stroke="#333" stroke-width="3" stroke-linecap="butt" stroke-linejoin="miter"/><path d="M2300.1 587.1L2307.75 594.8L2315.4 587.1" fill="none" stroke="#333" stroke-width="3" stroke-linecap="butt" stroke-linejoin="miter"/><path d="M2401.3 587.1L2408.95 594.8L2416.6 587.1" fill="none" stroke="#333" stroke-width="3" stroke-linecap="butt" stroke-linejoin="miter"/><path d="M2566.7 587.1L2574.35 594.8L2582.0 587.1" fill="none" stroke="#333" stroke-width="3" stroke-linecap="butt" stroke-linejoin="miter"/><text x="596" y="597.6" font-family="Liberation Sans, sans-serif" font-size="26" font-weight="400" fill="#333" text-anchor="start" >Paragraph</text><text x="888.1" y="603.9" font-family="Liberation Sans, sans-serif" font-size="39" font-weight="400" fill="#333" text-anchor="middle" >A</text><path d="M895.7 577.5H906.6M898.2 583.8H906.6M901 589.8H906.6" fill="none" stroke="#333" stroke-width="2.8" stroke-linecap="round" stroke-linejoin="round"/><text x="993" y="603.9" font-family="Liberation Sans, sans-serif" font-size="39" font-weight="400" fill="#333" text-anchor="middle" >A</text><path d="M1013.5 577V603" fill="none" stroke="#333" stroke-width="2.6" stroke-linecap="round" stroke-linejoin="round"/><path d="M1010.4 579.6L1013.5 576.5L1016.6 579.6M1010.4 600.4L1013.5 603.5L1016.6 600.4" fill="none" stroke="#333" stroke-width="2.6" stroke-linejoin='miter' stroke-linecap='square'/><text x="1096" y="603.9" font-family="Liberation Sans, sans-serif" font-size="38.8" font-weight="700" fill="#333" text-anchor="middle" >B</text><path d="M1160.5 577.4H1172.8M1154.8 602.7H1167.3" fill="none" stroke="#333" stroke-width="2.7" stroke-linecap="round" stroke-linejoin="round"/><path d="M1166.9 577.6L1161.2 602.5" fill="none" stroke="#333" stroke-width="3.9" /><path d="M1222.7 577.4V588.5A8.35 8.35 0 0 0 1239.4 588.5V577.4" fill="none" stroke="#333" stroke-width="2.8" stroke-linecap="round" stroke-linejoin="round"/><rect x="1217" y="603.1" width="28" height="2.8" fill="#333"/><path d="M1306.3 581.6C1304.6 578.6 1301.4 577.5 1297.8 577.5C1293.2 577.5 1290.4 580.3 1290.4 583.5C1290.4 586 1291.8 587.6 1294 588.8" fill="none" stroke="#333" stroke-width="2.8" stroke-linecap="round" stroke-linejoin="round"/><path d="M1304.3 593.2C1305.4 594.3 1305.9 595.5 1305.9 596.8C1305.9 600.2 1302.6 602.3 1298 602.3C1294.2 602.3 1291.2 600.9 1289.4 598.4" fill="none" stroke="#333" stroke-width="2.8" stroke-linecap="round" stroke-linejoin="round"/><rect x="1285.1" y="588" width="27.8" height="2.8" fill="#333"/><circle cx="1351.3" cy="581.5" r="3.5" fill="#333"/><path d="M1361.6 581.5H1380.5" fill="none" stroke="#333" stroke-width="3" stroke-linecap="round" stroke-linejoin="round"/><circle cx="1351.3" cy="599.4" r="3.5" fill="#333"/><path d="M1361.6 599.4H1380.5" fill="none" stroke="#333" stroke-width="3" stroke-linecap="round" stroke-linejoin="round"/><text x="1414.2" y="586" font-family="Liberation Sans, sans-serif" font-size="15" font-weight="700" fill="#333" text-anchor="start" >1</text><text x="1414.2" y="606.1" font-family="Liberation Sans, sans-serif" font-size="15" font-weight="700" fill="#333" text-anchor="start" >2</text><path d="M1429.8 581.5H1448.5" fill="none" stroke="#333" stroke-width="3" stroke-linecap="round" stroke-linejoin="round"/><path d="M1429.8 599.4H1448.5" fill="none" stroke="#333" stroke-width="3" stroke-linecap="round" stroke-linejoin="round"/><path d="M1484.3 580.7L1486.7 583.4L1492 578.3" fill="none" stroke="#333" stroke-width="2.6" stroke-linecap='square' stroke-linejoin='miter'/><path d="M1498.9 581.5H1517.4" fill="none" stroke="#333" stroke-width="3" stroke-linecap="round" stroke-linejoin="round"/><path d="M1484.3 598.6L1486.7 601.3L1492 596.2" fill="none" stroke="#333" stroke-width="2.6" stroke-linecap='square' stroke-linejoin='miter'/><path d="M1498.9 599.4H1517.4" fill="none" stroke="#333" stroke-width="3" stroke-linecap="round" stroke-linejoin="round"/><text x="1579.1" y="599.9" font-family="Liberation Sans, sans-serif" font-size="33.5" font-weight="400" fill="#333" text-anchor="middle" >A</text><path d="M1567 604.9H1591" fill="none" stroke="#333" stroke-width="4" stroke-linecap="round" stroke-linejoin="round"/><rect x="1660" y="574.1" width="32" height="31.8" rx="3.4" fill="#333"/><text x="1676" y="601.9" font-family="Liberation Sans, sans-serif" font-size="33.8" font-weight="400" fill="#fff" text-anchor="middle" >A</text><path d="M1771 575.2L1774.2 573.1L1781.9 577.7L1782.2 580L1770.2 600.6L1763.4 603.6L1760.6 605.6L1757.4 603.4L1757.6 594.6z" fill="#333" stroke="#333" stroke-width="1" stroke-linejoin="round"/><path d="M1774.6 576.8L1779.2 579.5L1770.8 595L1764 590.3z" fill="#fdfd77"/><path d="M1757.2 604.6L1760 606.6L1755.4 607.3z" fill="#333"/><path d="M1771.6 604.1H1790.9V606.7H1769.4z" fill="#333"/><path d="M1869.7 577.5H1898.5M1879.8 589.5H1898.5M1869.7 601.5H1898.5" fill="none" stroke="#999" stroke-width="3" stroke-linecap="round" stroke-linejoin="round"/><path d="M1866 583.9L1874.2 589.3L1866 594.7z" fill="#999"/><path d="M1937.8 577.5H1966.4M1947.9 589.5H1966.4M1937.8 601.5H1966.4" fill="none" stroke="#999" stroke-width="3" stroke-linecap="round" stroke-linejoin="round"/><path d="M1942 583.9L1933.7 589.3L1942 594.7z" fill="#999"/><g transform="translate(2029.1 590) rotate(33.7)" fill="none" stroke="#333" stroke-width="3" stroke-linecap="round" stroke-linejoin="round"><path d="M-8.4 -4.1V-7.2A8.4 8.4 0 0 1 8.4 -7.2V-4.1"/><path d="M-8.4 4.1V7.2A8.4 8.4 0 0 0 8.4 7.2V4.1"/><path d="M0 -5.200V5.200"/></g><rect x="2081.6" y="577.4" width="30.5" height="25.1" rx="1.6" fill="#fff" stroke="#333" stroke-width="2.8"/><circle cx="2104.2" cy="585" r="4.1" fill="#333"/><path d="M2082.5 600L2091.5 590.6L2099.6 597.5L2104.6 592.8L2111.4 599.4V602H2082.5z" fill="#333"/><path d="M2183.9 601.4V590.2C2183.9 583.6 2188.3 579.4 2196.3 578L2196.5 578.7C2191.0 580.6 2188.6 584.4 2188.4 590.1H2196.8V601.4A.6 .6 0 0 1 2196.2 602H2184.5A.6 .6 0 0 1 2183.9 601.4z" fill="#333"/><path d="M2200.1 601.4V590.2C2200.1 583.6 2204.5 579.4 2212.5 578L2212.7 578.7C2207.2 580.6 2204.8 584.4 2204.6 590.1H2213.0V601.4A.6 .6 0 0 1 2212.4 602H2200.7A.6 .6 0 0 1 2200.1 601.4z" fill="#333"/><rect x="2247.9" y="574.9" width="33.9" height="32" rx="3.6" fill="#333"/><rect x="2251" y="581.9" width="8" height="6.7" fill="#fff"/><rect x="2251" y="590.4" width="8" height="5.6" fill="#fff"/><rect x="2251" y="597.8" width="8" height="6.3" fill="#fff"/><rect x="2261" y="581.9" width="7.9" height="6.7" fill="#fff"/><rect x="2261" y="590.4" width="7.9" height="5.6" fill="#fff"/><rect x="2261" y="597.8" width="7.9" height="6.3" fill="#fff"/><rect x="2270.9" y="581.9" width="8" height="6.7" fill="#fff"/><rect x="2270.9" y="590.4" width="8" height="5.6" fill="#fff"/><rect x="2270.9" y="597.8" width="8" height="6.3" fill="#fff"/><path d="M2377.6 592V575.5A4 4 0 0 0 2373.6 571.5H2348.4A4 4 0 0 0 2344.4 575.5V602.5A4 4 0 0 0 2348.4 606.5H2356" fill="none" stroke="#333" stroke-width="2.8" /><path d="M2349 577H2354.8M2353.1 581H2362.9M2357.3 585H2371M2357.3 589H2371M2357.3 592.8H2363M2353 596.8H2356.8M2349 600.9H2352.8" fill="none" stroke="#333" stroke-width="1.9" /><path d="M2367.4 596.6L2360.9 601.6L2367.4 607.2M2374 596.6L2380.6 601.6L2374 607.2" fill="none" stroke="#333" stroke-width="3.2" stroke-linecap="round" stroke-linejoin="round"/><rect x="2448" y="588" width="32" height="3.8" fill="#333"/><rect x="2512.3" y="576" width="37.3" height="27.9" fill="#333"/><rect x="2519.3" y="579.7" width="23.2" height="20.5" fill="#fff"/><rect x="2514.8" y="578.00" width="2.2" height="2.1" fill="#fff"/><rect x="2544.9" y="578.00" width="2.2" height="2.1" fill="#fff"/><rect x="2514.8" y="582.04" width="2.2" height="2.1" fill="#fff"/><rect x="2544.9" y="582.04" width="2.2" height="2.1" fill="#fff"/><rect x="2514.8" y="586.08" width="2.2" height="2.1" fill="#fff"/><rect x="2544.9" y="586.08" width="2.2" height="2.1" fill="#fff"/><rect x="2514.8" y="590.12" width="2.2" height="2.1" fill="#fff"/><rect x="2544.9" y="590.12" width="2.2" height="2.1" fill="#fff"/><rect x="2514.8" y="594.16" width="2.2" height="2.1" fill="#fff"/><rect x="2544.9" y="594.16" width="2.2" height="2.1" fill="#fff"/><rect x="2514.8" y="598.20" width="2.2" height="2.1" fill="#fff"/><rect x="2544.9" y="598.20" width="2.2" height="2.1" fill="#fff"/><path d="M2526.1 583.4V596.5L2538 590z" fill="#333"/><path d="M2631.3 580.6L2624.4 586.9L2631.3 593.4M2625 586.9H2646.5A6.7 6.7 0 0 1 2646.5 600.3H2644.6" fill="none" stroke="#999" stroke-width="3.2" stroke-linecap="round" stroke-linejoin="round"/><path d="M2712.7 580.6L2719.6 586.9L2712.7 593.4M2719 586.9H2697.5A6.7 6.7 0 0 0 2697.5 600.3H2699.4" fill="none" stroke="#999" stroke-width="3.2" stroke-linecap="round" stroke-linejoin="round"/><circle cx="2792.9" cy="579" r="3.05" fill="#333"/><circle cx="2792.9" cy="591" r="3.05" fill="#333"/><circle cx="2792.9" cy="603.1" r="3.05" fill="#333"/></svg><span id="t32" class="t" style='left:585.58px;top:662.00px;font-size:28px;line-height:28px;color:#333;letter-spacing:0.241px;'>I found a bug while executing the TestNG tests</span><div style="left:2705.2px;top:661px;width:108.6px;height:59.2px;background:#fff;border:2px solid #cdd2e0;border-radius:27px 29.6px 29.6px 0;box-shadow:2px 3px 8px rgba(0,0,0,.10)"></div><svg style="left:2718px;top:670px;" width="36" height="44" viewBox="0 0 36 44" ><path d="M17.100 3.600A14.400 14.400 0 0 1 27.600 27.900L25.200 32.300H9L6.600 27.900A14.400 14.400 0 0 1 17.100 3.600z" fill="#0ba38d"/><circle cx="17.100" cy="17.600" r="10.500" fill="#04c2a2" opacity=".55"/><circle cx="17.100" cy="17.800" r="7" fill="#04c6a5" opacity=".5"/><path d="M9.700 35.100H24.500L23.600 38.200A2.600 2.600 0 0 1 21.200 40H13A2.600 2.600 0 0 1 10.600 38.200z" fill="#0b9c88"/><path d="M17.100 10C17.700 14.600 20.500 17.400 25.100 18C20.500 18.600 17.700 21.400 17.100 26C16.500 21.400 13.700 18.600 9.100 18C13.700 17.400 16.500 14.600 17.100 10z" fill="#fff"/></svg><svg style="left:2760px;top:666px;" width="56" height="50" viewBox="0 0 56 50" ><path d="M3 46.800V25.100A22.300 22.300 0 1 1 25.400 47.400z" fill="#0b7d6f"/><path d="M16.400 13C5.500 21 5.500 35 22.300 40.900" fill="none" stroke="#e6f4f0" stroke-width="2.500" stroke-linecap="round"/><rect x="32.100" y="14.900" width="19.700" height="20.500" rx="3" fill="#4e9a58"/><circle cx="43.900" cy="35" r="7.900" fill="#8b5cf0"/></svg><span id="t33" class="t" style='left:566.75px;top:740.90px;font-size:28px;line-height:28px;color:#333;letter-spacing:0.575px;'>Notes:</span><div style="left:567.7px;top:775px;width:2266.1000000000004px;height:172.79999999999995px;background:#fff;border:2px solid #ccced1;border-radius:5px"></div><div style="left:567.7px;top:854px;width:2266.1000000000004px;height:2px;background:#ccced1"></div><svg style="left:560px;top:776.1px" width="2300" height="80" viewBox="560 550 2300 80"><rect x="958.8" y="559.4" width="2.2" height="60.7" fill="#ccced1"/><rect x="1538.7" y="559.4" width="2.2" height="60.7" fill="#ccced1"/><rect x="1844.8" y="559.4" width="2.2" height="60.7" fill="#ccced1"/><rect x="1989.9" y="559.4" width="2.2" height="60.7" fill="#ccced1"/><rect x="2598.8" y="559.4" width="2.2" height="60.7" fill="#ccced1"/><rect x="2754.9" y="559.4" width="2.2" height="60.7" fill="#ccced1"/><path d="M818.7 587.1L826.35 594.8L834.0 587.1" fill="none" stroke="#333" stroke-width="3" stroke-linecap="butt" stroke-linejoin="miter"/><path d="M927.5 587.1L935.15 594.8L942.8 587.1" fill="none" stroke="#333" stroke-width="3" stroke-linecap="butt" stroke-linejoin="miter"/><path d="M1034.7 587.1L1042.35 594.8L1050.0 587.1" fill="none" stroke="#333" stroke-width="3" stroke-linecap="butt" stroke-linejoin="miter"/><path d="M1614.4 587.1L1622.05 594.8L1629.7 587.1" fill="none" stroke="#333" stroke-width="3" stroke-linecap="butt" stroke-linejoin="miter"/><path d="M1711.4 587.1L1719.05 594.8L1726.7 587.1" fill="none" stroke="#333" stroke-width="3" stroke-linecap="butt" stroke-linejoin="miter"/><path d="M1812.4 587.1L1820.05 594.8L1827.7 587.1" fill="none" stroke="#333" stroke-width="3" stroke-linecap="butt" stroke-linejoin="miter"/><path d="M2135.3 587.1L2142.95 594.8L2150.6 587.1" fill="none" stroke="#333" stroke-width="3" stroke-linecap="butt" stroke-linejoin="miter"/><path d="M2300.1 587.1L2307.75 594.8L2315.4 587.1" fill="none" stroke="#333" stroke-width="3" stroke-linecap="butt" stroke-linejoin="miter"/><path d="M2401.3 587.1L2408.95 594.8L2416.6 587.1" fill="none" stroke="#333" stroke-width="3" stroke-linecap="butt" stroke-linejoin="miter"/><path d="M2566.7 587.1L2574.35 594.8L2582.0 587.1" fill="none" stroke="#333" stroke-width="3" stroke-linecap="butt" stroke-linejoin="miter"/><text x="596" y="597.6" font-family="Liberation Sans, sans-serif" font-size="26" font-weight="400" fill="#333" text-anchor="start" >Paragraph</text><text x="888.1" y="603.9" font-family="Liberation Sans, sans-serif" font-size="39" font-weight="400" fill="#333" text-anchor="middle" >A</text><path d="M895.7 577.5H906.6M898.2 583.8H906.6M901 589.8H906.6" fill="none" stroke="#333" stroke-width="2.8" stroke-linecap="round" stroke-linejoin="round"/><text x="993" y="603.9" font-family="Liberation Sans, sans-serif" font-size="39" font-weight="400" fill="#333" text-anchor="middle" >A</text><path d="M1013.5 577V603" fill="none" stroke="#333" stroke-width="2.6" stroke-linecap="round" stroke-linejoin="round"/><path d="M1010.4 579.6L1013.5 576.5L1016.6 579.6M1010.4 600.4L1013.5 603.5L1016.6 600.4" fill="none" stroke="#333" stroke-width="2.6" stroke-linejoin='miter' stroke-linecap='square'/><text x="1096" y="603.9" font-family="Liberation Sans, sans-serif" font-size="38.8" font-weight="700" fill="#333" text-anchor="middle" >B</text><path d="M1160.5 577.4H1172.8M1154.8 602.7H1167.3" fill="none" stroke="#333" stroke-width="2.7" stroke-linecap="round" stroke-linejoin="round"/><path d="M1166.9 577.6L1161.2 602.5" fill="none" stroke="#333" stroke-width="3.9" /><path d="M1222.7 577.4V588.5A8.35 8.35 0 0 0 1239.4 588.5V577.4" fill="none" stroke="#333" stroke-width="2.8" stroke-linecap="round" stroke-linejoin="round"/><rect x="1217" y="603.1" width="28" height="2.8" fill="#333"/><path d="M1306.3 581.6C1304.6 578.6 1301.4 577.5 1297.8 577.5C1293.2 577.5 1290.4 580.3 1290.4 583.5C1290.4 586 1291.8 587.6 1294 588.8" fill="none" stroke="#333" stroke-width="2.8" stroke-linecap="round" stroke-linejoin="round"/><path d="M1304.3 593.2C1305.4 594.3 1305.9 595.5 1305.9 596.8C1305.9 600.2 1302.6 602.3 1298 602.3C1294.2 602.3 1291.2 600.9 1289.4 598.4" fill="none" stroke="#333" stroke-width="2.8" stroke-linecap="round" stroke-linejoin="round"/><rect x="1285.1" y="588" width="27.8" height="2.8" fill="#333"/><circle cx="1351.3" cy="581.5" r="3.5" fill="#333"/><path d="M1361.6 581.5H1380.5" fill="none" stroke="#333" stroke-width="3" stroke-linecap="round" stroke-linejoin="round"/><circle cx="1351.3" cy="599.4" r="3.5" fill="#333"/><path d="M1361.6 599.4H1380.5" fill="none" stroke="#333" stroke-width="3" stroke-linecap="round" stroke-linejoin="round"/><text x="1414.2" y="586" font-family="Liberation Sans, sans-serif" font-size="15" font-weight="700" fill="#333" text-anchor="start" >1</text><text x="1414.2" y="606.1" font-family="Liberation Sans, sans-serif" font-size="15" font-weight="700" fill="#333" text-anchor="start" >2</text><path d="M1429.8 581.5H1448.5" fill="none" stroke="#333" stroke-width="3" stroke-linecap="round" stroke-linejoin="round"/><path d="M1429.8 599.4H1448.5" fill="none" stroke="#333" stroke-width="3" stroke-linecap="round" stroke-linejoin="round"/><path d="M1484.3 580.7L1486.7 583.4L1492 578.3" fill="none" stroke="#333" stroke-width="2.6" stroke-linecap='square' stroke-linejoin='miter'/><path d="M1498.9 581.5H1517.4" fill="none" stroke="#333" stroke-width="3" stroke-linecap="round" stroke-linejoin="round"/><path d="M1484.3 598.6L1486.7 601.3L1492 596.2" fill="none" stroke="#333" stroke-width="2.6" stroke-linecap='square' stroke-linejoin='miter'/><path d="M1498.9 599.4H1517.4" fill="none" stroke="#333" stroke-width="3" stroke-linecap="round" stroke-linejoin="round"/><text x="1579.1" y="599.9" font-family="Liberation Sans, sans-serif" font-size="33.5" font-weight="400" fill="#333" text-anchor="middle" >A</text><path d="M1567 604.9H1591" fill="none" stroke="#333" stroke-width="4" stroke-linecap="round" stroke-linejoin="round"/><rect x="1660" y="574.1" width="32" height="31.8" rx="3.4" fill="#333"/><text x="1676" y="601.9" font-family="Liberation Sans, sans-serif" font-size="33.8" font-weight="400" fill="#fff" text-anchor="middle" >A</text><path d="M1771 575.2L1774.2 573.1L1781.9 577.7L1782.2 580L1770.2 600.6L1763.4 603.6L1760.6 605.6L1757.4 603.4L1757.6 594.6z" fill="#333" stroke="#333" stroke-width="1" stroke-linejoin="round"/><path d="M1774.6 576.8L1779.2 579.5L1770.8 595L1764 590.3z" fill="#fdfd77"/><path d="M1757.2 604.6L1760 606.6L1755.4 607.3z" fill="#333"/><path d="M1771.6 604.1H1790.9V606.7H1769.4z" fill="#333"/><path d="M1869.7 577.5H1898.5M1879.8 589.5H1898.5M1869.7 601.5H1898.5" fill="none" stroke="#999" stroke-width="3" stroke-linecap="round" stroke-linejoin="round"/><path d="M1866 583.9L1874.2 589.3L1866 594.7z" fill="#999"/><path d="M1937.8 577.5H1966.4M1947.9 589.5H1966.4M1937.8 601.5H1966.4" fill="none" stroke="#999" stroke-width="3" stroke-linecap="round" stroke-linejoin="round"/><path d="M1942 583.9L1933.7 589.3L1942 594.7z" fill="#999"/><g transform="translate(2029.1 590) rotate(33.7)" fill="none" stroke="#333" stroke-width="3" stroke-linecap="round" stroke-linejoin="round"><path d="M-8.4 -4.1V-7.2A8.4 8.4 0 0 1 8.4 -7.2V-4.1"/><path d="M-8.4 4.1V7.2A8.4 8.4 0 0 0 8.4 7.2V4.1"/><path d="M0 -5.200V5.200"/></g><rect x="2081.6" y="577.4" width="30.5" height="25.1" rx="1.6" fill="#fff" stroke="#333" stroke-width="2.8"/><circle cx="2104.2" cy="585" r="4.1" fill="#333"/><path d="M2082.5 600L2091.5 590.6L2099.6 597.5L2104.6 592.8L2111.4 599.4V602H2082.5z" fill="#333"/><path d="M2183.9 601.4V590.2C2183.9 583.6 2188.3 579.4 2196.3 578L2196.5 578.7C2191.0 580.6 2188.6 584.4 2188.4 590.1H2196.8V601.4A.6 .6 0 0 1 2196.2 602H2184.5A.6 .6 0 0 1 2183.9 601.4z" fill="#333"/><path d="M2200.1 601.4V590.2C2200.1 583.6 2204.5 579.4 2212.5 578L2212.7 578.7C2207.2 580.6 2204.8 584.4 2204.6 590.1H2213.0V601.4A.6 .6 0 0 1 2212.4 602H2200.7A.6 .6 0 0 1 2200.1 601.4z" fill="#333"/><rect x="2247.9" y="574.9" width="33.9" height="32" rx="3.6" fill="#333"/><rect x="2251" y="581.9" width="8" height="6.7" fill="#fff"/><rect x="2251" y="590.4" width="8" height="5.6" fill="#fff"/><rect x="2251" y="597.8" width="8" height="6.3" fill="#fff"/><rect x="2261" y="581.9" width="7.9" height="6.7" fill="#fff"/><rect x="2261" y="590.4" width="7.9" height="5.6" fill="#fff"/><rect x="2261" y="597.8" width="7.9" height="6.3" fill="#fff"/><rect x="2270.9" y="581.9" width="8" height="6.7" fill="#fff"/><rect x="2270.9" y="590.4" width="8" height="5.6" fill="#fff"/><rect x="2270.9" y="597.8" width="8" height="6.3" fill="#fff"/><path d="M2377.6 592V575.5A4 4 0 0 0 2373.6 571.5H2348.4A4 4 0 0 0 2344.4 575.5V602.5A4 4 0 0 0 2348.4 606.5H2356" fill="none" stroke="#333" stroke-width="2.8" /><path d="M2349 577H2354.8M2353.1 581H2362.9M2357.3 585H2371M2357.3 589H2371M2357.3 592.8H2363M2353 596.8H2356.8M2349 600.9H2352.8" fill="none" stroke="#333" stroke-width="1.9" /><path d="M2367.4 596.6L2360.9 601.6L2367.4 607.2M2374 596.6L2380.6 601.6L2374 607.2" fill="none" stroke="#333" stroke-width="3.2" stroke-linecap="round" stroke-linejoin="round"/><rect x="2448" y="588" width="32" height="3.8" fill="#333"/><rect x="2512.3" y="576" width="37.3" height="27.9" fill="#333"/><rect x="2519.3" y="579.7" width="23.2" height="20.5" fill="#fff"/><rect x="2514.8" y="578.00" width="2.2" height="2.1" fill="#fff"/><rect x="2544.9" y="578.00" width="2.2" height="2.1" fill="#fff"/><rect x="2514.8" y="582.04" width="2.2" height="2.1" fill="#fff"/><rect x="2544.9" y="582.04" width="2.2" height="2.1" fill="#fff"/><rect x="2514.8" y="586.08" width="2.2" height="2.1" fill="#fff"/><rect x="2544.9" y="586.08" width="2.2" height="2.1" fill="#fff"/><rect x="2514.8" y="590.12" width="2.2" height="2.1" fill="#fff"/><rect x="2544.9" y="590.12" width="2.2" height="2.1" fill="#fff"/><rect x="2514.8" y="594.16" width="2.2" height="2.1" fill="#fff"/><rect x="2544.9" y="594.16" width="2.2" height="2.1" fill="#fff"/><rect x="2514.8" y="598.20" width="2.2" height="2.1" fill="#fff"/><rect x="2544.9" y="598.20" width="2.2" height="2.1" fill="#fff"/><path d="M2526.1 583.4V596.5L2538 590z" fill="#333"/><path d="M2631.3 580.6L2624.4 586.9L2631.3 593.4M2625 586.9H2646.5A6.7 6.7 0 0 1 2646.5 600.3H2644.6" fill="none" stroke="#999" stroke-width="3.2" stroke-linecap="round" stroke-linejoin="round"/><path d="M2712.7 580.6L2719.6 586.9L2712.7 593.4M2719 586.9H2697.5A6.7 6.7 0 0 0 2697.5 600.3H2699.4" fill="none" stroke="#999" stroke-width="3.2" stroke-linecap="round" stroke-linejoin="round"/><circle cx="2792.9" cy="579" r="3.05" fill="#333"/><circle cx="2792.9" cy="591" r="3.05" fill="#333"/><circle cx="2792.9" cy="603.1" r="3.05" fill="#333"/></svg><span id="t34" class="t" style='left:559.12px;top:986.12px;font-size:27.5px;line-height:27.5px;color:#f07f2d;letter-spacing:0.511px;'>Comments</span><div style="left:552px;top:1020.4px;width:2282px;height:2px;background:#f07f2d"></div><svg style="left:2793.6px;top:988px;" width="24.3" height="24.3" viewBox="0 0 24.300 24.300" ><path d="M12.150 0V24.300M0 12.150H24.300" stroke="#c2c2c2" stroke-width="4"/></svg><span id="t35" class="t" style='left:566.75px;top:1057.90px;font-size:28px;line-height:28px;color:#333;letter-spacing:0.653px;'>Displaying</span><div style="left:717.5px;top:1039px;width:382.5px;height:54px;background:#fff;border:2px solid #ccc;border-radius:8px"></div><div style="left:915px;top:1041px;width:2px;height:50px;background:#ccc"></div><span id="t36" class="t" style='left:741.73px;top:1051.90px;font-size:28px;line-height:28px;color:#333;letter-spacing:0.652px;'>newest first</span><span id="t37" class="t" style='left:939.88px;top:1051.90px;font-size:28px;line-height:28px;color:#333;letter-spacing:0.720px;'>oldest first</span><div style="left:567.7px;top:1118px;width:2266.1000000000004px;height:173.5999999999999px;background:#fff;border:2px solid #ccced1;border-radius:5px"></div><div style="left:567.7px;top:1197px;width:2266.1000000000004px;height:2px;background:#ccced1"></div><svg style="left:560px;top:1119.1px" width="2300" height="80" viewBox="560 550 2300 80"><rect x="958.8" y="559.4" width="2.2" height="60.7" fill="#ccced1"/><rect x="1538.7" y="559.4" width="2.2" height="60.7" fill="#ccced1"/><rect x="1844.8" y="559.4" width="2.2" height="60.7" fill="#ccced1"/><rect x="1989.9" y="559.4" width="2.2" height="60.7" fill="#ccced1"/><rect x="2598.8" y="559.4" width="2.2" height="60.7" fill="#ccced1"/><rect x="2754.9" y="559.4" width="2.2" height="60.7" fill="#ccced1"/><path d="M818.7 587.1L826.35 594.8L834.0 587.1" fill="none" stroke="#333" stroke-width="3" stroke-linecap="butt" stroke-linejoin="miter"/><path d="M927.5 587.1L935.15 594.8L942.8 587.1" fill="none" stroke="#333" stroke-width="3" stroke-linecap="butt" stroke-linejoin="miter"/><path d="M1034.7 587.1L1042.35 594.8L1050.0 587.1" fill="none" stroke="#333" stroke-width="3" stroke-linecap="butt" stroke-linejoin="miter"/><path d="M1614.4 587.1L1622.05 594.8L1629.7 587.1" fill="none" stroke="#333" stroke-width="3" stroke-linecap="butt" stroke-linejoin="miter"/><path d="M1711.4 587.1L1719.05 594.8L1726.7 587.1" fill="none" stroke="#333" stroke-width="3" stroke-linecap="butt" stroke-linejoin="miter"/><path d="M1812.4 587.1L1820.05 594.8L1827.7 587.1" fill="none" stroke="#333" stroke-width="3" stroke-linecap="butt" stroke-linejoin="miter"/><path d="M2135.3 587.1L2142.95 594.8L2150.6 587.1" fill="none" stroke="#333" stroke-width="3" stroke-linecap="butt" stroke-linejoin="miter"/><path d="M2300.1 587.1L2307.75 594.8L2315.4 587.1" fill="none" stroke="#333" stroke-width="3" stroke-linecap="butt" stroke-linejoin="miter"/><path d="M2401.3 587.1L2408.95 594.8L2416.6 587.1" fill="none" stroke="#333" stroke-width="3" stroke-linecap="butt" stroke-linejoin="miter"/><path d="M2566.7 587.1L2574.35 594.8L2582.0 587.1" fill="none" stroke="#333" stroke-width="3" stroke-linecap="butt" stroke-linejoin="miter"/><text x="596" y="597.6" font-family="Liberation Sans, sans-serif" font-size="26" font-weight="400" fill="#333" text-anchor="start" >Paragraph</text><text x="888.1" y="603.9" font-family="Liberation Sans, sans-serif" font-size="39" font-weight="400" fill="#333" text-anchor="middle" >A</text><path d="M895.7 577.5H906.6M898.2 583.8H906.6M901 589.8H906.6" fill="none" stroke="#333" stroke-width="2.8" stroke-linecap="round" stroke-linejoin="round"/><text x="993" y="603.9" font-family="Liberation Sans, sans-serif" font-size="39" font-weight="400" fill="#333" text-anchor="middle" >A</text><path d="M1013.5 577V603" fill="none" stroke="#333" stroke-width="2.6" stroke-linecap="round" stroke-linejoin="round"/><path d="M1010.4 579.6L1013.5 576.5L1016.6 579.6M1010.4 600.4L1013.5 603.5L1016.6 600.4" fill="none" stroke="#333" stroke-width="2.6" stroke-linejoin='miter' stroke-linecap='square'/><text x="1096" y="603.9" font-family="Liberation Sans, sans-serif" font-size="38.8" font-weight="700" fill="#333" text-anchor="middle" >B</text><path d="M1160.5 577.4H1172.8M1154.8 602.7H1167.3" fill="none" stroke="#333" stroke-width="2.7" stroke-linecap="round" stroke-linejoin="round"/><path d="M1166.9 577.6L1161.2 602.5" fill="none" stroke="#333" stroke-width="3.9" /><path d="M1222.7 577.4V588.5A8.35 8.35 0 0 0 1239.4 588.5V577.4" fill="none" stroke="#333" stroke-width="2.8" stroke-linecap="round" stroke-linejoin="round"/><rect x="1217" y="603.1" width="28" height="2.8" fill="#333"/><path d="M1306.3 581.6C1304.6 578.6 1301.4 577.5 1297.8 577.5C1293.2 577.5 1290.4 580.3 1290.4 583.5C1290.4 586 1291.8 587.6 1294 588.8" fill="none" stroke="#333" stroke-width="2.8" stroke-linecap="round" stroke-linejoin="round"/><path d="M1304.3 593.2C1305.4 594.3 1305.9 595.5 1305.9 596.8C1305.9 600.2 1302.6 602.3 1298 602.3C1294.2 602.3 1291.2 600.9 1289.4 598.4" fill="none" stroke="#333" stroke-width="2.8" stroke-linecap="round" stroke-linejoin="round"/><rect x="1285.1" y="588" width="27.8" height="2.8" fill="#333"/><circle cx="1351.3" cy="581.5" r="3.5" fill="#333"/><path d="M1361.6 581.5H1380.5" fill="none" stroke="#333" stroke-width="3" stroke-linecap="round" stroke-linejoin="round"/><circle cx="1351.3" cy="599.4" r="3.5" fill="#333"/><path d="M1361.6 599.4H1380.5" fill="none" stroke="#333" stroke-width="3" stroke-linecap="round" stroke-linejoin="round"/><text x="1414.2" y="586" font-family="Liberation Sans, sans-serif" font-size="15" font-weight="700" fill="#333" text-anchor="start" >1</text><text x="1414.2" y="606.1" font-family="Liberation Sans, sans-serif" font-size="15" font-weight="700" fill="#333" text-anchor="start" >2</text><path d="M1429.8 581.5H1448.5" fill="none" stroke="#333" stroke-width="3" stroke-linecap="round" stroke-linejoin="round"/><path d="M1429.8 599.4H1448.5" fill="none" stroke="#333" stroke-width="3" stroke-linecap="round" stroke-linejoin="round"/><path d="M1484.3 580.7L1486.7 583.4L1492 578.3" fill="none" stroke="#333" stroke-width="2.6" stroke-linecap='square' stroke-linejoin='miter'/><path d="M1498.9 581.5H1517.4" fill="none" stroke="#333" stroke-width="3" stroke-linecap="round" stroke-linejoin="round"/><path d="M1484.3 598.6L1486.7 601.3L1492 596.2" fill="none" stroke="#333" stroke-width="2.6" stroke-linecap='square' stroke-linejoin='miter'/><path d="M1498.9 599.4H1517.4" fill="none" stroke="#333" stroke-width="3" stroke-linecap="round" stroke-linejoin="round"/><text x="1579.1" y="599.9" font-family="Liberation Sans, sans-serif" font-size="33.5" font-weight="400" fill="#333" text-anchor="middle" >A</text><path d="M1567 604.9H1591" fill="none" stroke="#333" stroke-width="4" stroke-linecap="round" stroke-linejoin="round"/><rect x="1660" y="574.1" width="32" height="31.8" rx="3.4" fill="#333"/><text x="1676" y="601.9" font-family="Liberation Sans, sans-serif" font-size="33.8" font-weight="400" fill="#fff" text-anchor="middle" >A</text><path d="M1771 575.2L1774.2 573.1L1781.9 577.7L1782.2 580L1770.2 600.6L1763.4 603.6L1760.6 605.6L1757.4 603.4L1757.6 594.6z" fill="#333" stroke="#333" stroke-width="1" stroke-linejoin="round"/><path d="M1774.6 576.8L1779.2 579.5L1770.8 595L1764 590.3z" fill="#fdfd77"/><path d="M1757.2 604.6L1760 606.6L1755.4 607.3z" fill="#333"/><path d="M1771.6 604.1H1790.9V606.7H1769.4z" fill="#333"/><path d="M1869.7 577.5H1898.5M1879.8 589.5H1898.5M1869.7 601.5H1898.5" fill="none" stroke="#999" stroke-width="3" stroke-linecap="round" stroke-linejoin="round"/><path d="M1866 583.9L1874.2 589.3L1866 594.7z" fill="#999"/><path d="M1937.8 577.5H1966.4M1947.9 589.5H1966.4M1937.8 601.5H1966.4" fill="none" stroke="#999" stroke-width="3" stroke-linecap="round" stroke-linejoin="round"/><path d="M1942 583.9L1933.7 589.3L1942 594.7z" fill="#999"/><g transform="translate(2029.1 590) rotate(33.7)" fill="none" stroke="#333" stroke-width="3" stroke-linecap="round" stroke-linejoin="round"><path d="M-8.4 -4.1V-7.2A8.4 8.4 0 0 1 8.4 -7.2V-4.1"/><path d="M-8.4 4.1V7.2A8.4 8.4 0 0 0 8.4 7.2V4.1"/><path d="M0 -5.200V5.200"/></g><rect x="2081.6" y="577.4" width="30.5" height="25.1" rx="1.6" fill="#fff" stroke="#333" stroke-width="2.8"/><circle cx="2104.2" cy="585" r="4.1" fill="#333"/><path d="M2082.5 600L2091.5 590.6L2099.6 597.5L2104.6 592.8L2111.4 599.4V602H2082.5z" fill="#333"/><path d="M2183.9 601.4V590.2C2183.9 583.6 2188.3 579.4 2196.3 578L2196.5 578.7C2191.0 580.6 2188.6 584.4 2188.4 590.1H2196.8V601.4A.6 .6 0 0 1 2196.2 602H2184.5A.6 .6 0 0 1 2183.9 601.4z" fill="#333"/><path d="M2200.1 601.4V590.2C2200.1 583.6 2204.5 579.4 2212.5 578L2212.7 578.7C2207.2 580.6 2204.8 584.4 2204.6 590.1H2213.0V601.4A.6 .6 0 0 1 2212.4 602H2200.7A.6 .6 0 0 1 2200.1 601.4z" fill="#333"/><rect x="2247.9" y="574.9" width="33.9" height="32" rx="3.6" fill="#333"/><rect x="2251" y="581.9" width="8" height="6.7" fill="#fff"/><rect x="2251" y="590.4" width="8" height="5.6" fill="#fff"/><rect x="2251" y="597.8" width="8" height="6.3" fill="#fff"/><rect x="2261" y="581.9" width="7.9" height="6.7" fill="#fff"/><rect x="2261" y="590.4" width="7.9" height="5.6" fill="#fff"/><rect x="2261" y="597.8" width="7.9" height="6.3" fill="#fff"/><rect x="2270.9" y="581.9" width="8" height="6.7" fill="#fff"/><rect x="2270.9" y="590.4" width="8" height="5.6" fill="#fff"/><rect x="2270.9" y="597.8" width="8" height="6.3" fill="#fff"/><path d="M2377.6 592V575.5A4 4 0 0 0 2373.6 571.5H2348.4A4 4 0 0 0 2344.4 575.5V602.5A4 4 0 0 0 2348.4 606.5H2356" fill="none" stroke="#333" stroke-width="2.8" /><path d="M2349 577H2354.8M2353.1 581H2362.9M2357.3 585H2371M2357.3 589H2371M2357.3 592.8H2363M2353 596.8H2356.8M2349 600.9H2352.8" fill="none" stroke="#333" stroke-width="1.9" /><path d="M2367.4 596.6L2360.9 601.6L2367.4 607.2M2374 596.6L2380.6 601.6L2374 607.2" fill="none" stroke="#333" stroke-width="3.2" stroke-linecap="round" stroke-linejoin="round"/><rect x="2448" y="588" width="32" height="3.8" fill="#333"/><rect x="2512.3" y="576" width="37.3" height="27.9" fill="#333"/><rect x="2519.3" y="579.7" width="23.2" height="20.5" fill="#fff"/><rect x="2514.8" y="578.00" width="2.2" height="2.1" fill="#fff"/><rect x="2544.9" y="578.00" width="2.2" height="2.1" fill="#fff"/><rect x="2514.8" y="582.04" width="2.2" height="2.1" fill="#fff"/><rect x="2544.9" y="582.04" width="2.2" height="2.1" fill="#fff"/><rect x="2514.8" y="586.08" width="2.2" height="2.1" fill="#fff"/><rect x="2544.9" y="586.08" width="2.2" height="2.1" fill="#fff"/><rect x="2514.8" y="590.12" width="2.2" height="2.1" fill="#fff"/><rect x="2544.9" y="590.12" width="2.2" height="2.1" fill="#fff"/><rect x="2514.8" y="594.16" width="2.2" height="2.1" fill="#fff"/><rect x="2544.9" y="594.16" width="2.2" height="2.1" fill="#fff"/><rect x="2514.8" y="598.20" width="2.2" height="2.1" fill="#fff"/><rect x="2544.9" y="598.20" width="2.2" height="2.1" fill="#fff"/><path d="M2526.1 583.4V596.5L2538 590z" fill="#333"/><path d="M2631.3 580.6L2624.4 586.9L2631.3 593.4M2625 586.9H2646.5A6.7 6.7 0 0 1 2646.5 600.3H2644.6" fill="none" stroke="#999" stroke-width="3.2" stroke-linecap="round" stroke-linejoin="round"/><path d="M2712.7 580.6L2719.6 586.9L2712.7 593.4M2719 586.9H2697.5A6.7 6.7 0 0 0 2697.5 600.3H2699.4" fill="none" stroke="#999" stroke-width="3.2" stroke-linecap="round" stroke-linejoin="round"/><circle cx="2792.9" cy="579" r="3.05" fill="#333"/><circle cx="2792.9" cy="591" r="3.05" fill="#333"/><circle cx="2792.9" cy="603.1" r="3.05" fill="#333"/></svg><div style="left:0px;top:1307.9px;width:2878px;height:100px;background:linear-gradient(#f6f6f6 0%,#f3f3f3 50%,#e9e9e9 92%,#e6e6e6 100%);border-top:2.3px solid #fcc22d"></div><div style="left:0px;top:1407.9px;width:2878px;height:12.1px;background:linear-gradient(90deg,#fbfbfb 0,#eeeeee 120px,#ececec 2500px,#ffffff 2760px,#fafafa 2860px)"></div><span id="t38" class="t" style='left:16.05px;top:1330.64px;font-size:25px;line-height:25px;color:#707070;font-weight:700;letter-spacing:0.090px;'>SpiraTeam v7.12.0.0</span><span id="t39" class="t" style='left:259.75px;top:1330.64px;font-size:25px;line-height:25px;color:#777;letter-spacing:0.112px;'>| en-US | Eastern Standard Time (UTC-5)</span><span id="t40" class="t" style='left:15.55px;top:1375.24px;font-size:25px;line-height:25px;color:#777;letter-spacing:0.308px;'>Copyright (C) 2024,</span><span id="t41" class="t" style='left:244.15px;top:1375.24px;font-size:25px;line-height:25px;color:#ee7f2d;letter-spacing:0.334px;'>Inflectra Corporation</span><span id="t42" class="t" style='left:2669.12px;top:1338.61px;font-size:45px;line-height:45px;color:#1a1a1a;font-style:italic;letter-spacing:1.500px;'>in<span style="display:inline-block;transform:scaleY(1.3);transform-origin:50% 84.65%">fl</span>ectra</span><div style="left:2673.4px;top:1343.3px;width:7px;height:7px;background:#fcc22d;border-radius:50%"></div><svg style="left:2722px;top:1379px;" width="116" height="6" viewBox="0 0 116 6" ><path d="M0 1.6L114.300 1L114.300 4.400L0 5z" fill="#fcc22d"/></svg><svg style="left:2840px;top:1326px;" width="24" height="26" viewBox="0 0 24 26" ><path d="M2 20C5 12 9 16 13 11S18 9 22 2M2 16C5 8.500 9 12 13 7.500S18 6 22 .5M2.500 24C5.500 16 9.500 19.500 13.500 15S18.500 13 21.500 6.500" fill="none" stroke="#fcc22d" stroke-width="1.7"/></svg><svg style="left:0px;top:1400px;" width="10" height="20" viewBox="0 0 10 20" ><path d="M0 1.500C.8 10 3 16 8.500 20H0z" fill="#000"/></svg><svg style="left:2870px;top:1412px;" width="8" height="8" viewBox="0 0 8 8" ><path d="M8 2.500C7 5 5.500 7 3 8H8z" fill="#1a0d08"/></svg>
</body></html>
